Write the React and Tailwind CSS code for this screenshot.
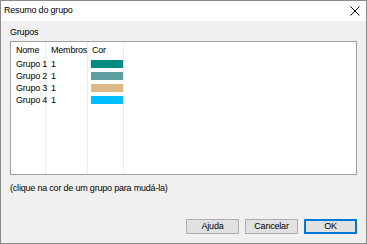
const grupos = [
  { nome: "Grupo 1", membros: 1, cor: "#008b82" },
  { nome: "Grupo 2", membros: 1, cor: "#5f9ea0" },
  { nome: "Grupo 3", membros: 1, cor: "#deb887" },
  { nome: "Grupo 4", membros: 1, cor: "#00bfff" },
];

function Button({ children, primary }) {
  return (
    <button
      type="button"
      className={
        primary
          ? "w-[53px] h-[15px] bg-[#e1e1e1] border border-[#0078d7] ring-1 ring-inset ring-[#0078d7] text-[9px] leading-none text-black"
          : "w-[53px] h-[15px] bg-[#e1e1e1] border border-[#adadad] text-[9px] leading-none text-black"
      }
    >
      {children}
    </button>
  );
}

export default function App() {
  return (
    <div
      className="w-[367px] h-[244px] border border-[#8a8a8a] flex flex-col text-black whitespace-nowrap tracking-[-0.2px]"
      style={{ fontFamily: "'Liberation Sans', Arial, sans-serif" }}
    >
      {/* barra de titulo */}
      <div className="h-[20px] bg-white flex items-center justify-between pl-[3px] pr-[5px]">
        <span className="text-[9px] leading-none -mt-[1px]">Resumo do grupo</span>
        <svg width="10" height="10" viewBox="0 0 10 10" className="mr-[1px]">
          <path d="M0.5 0.5 L9.5 9.5 M9.5 0.5 L0.5 9.5" stroke="#000" strokeWidth="1" />
        </svg>
      </div>

      <div className="flex-1 bg-[#f0f0f0] px-[9px] flex flex-col">
        <div className="text-[9px] leading-none mt-[7px] mb-[4px]">Grupos</div>

        <div className="h-[134px] border border-[#a0a0a0] bg-white flex text-[9px] leading-none">
          <div className="w-[35px] border-r border-[#ececec] pl-[5px]">
            <div className="h-[16px] flex items-center">Nome</div>
            {grupos.map((g) => (
              <div key={g.nome} className="h-[12px] flex items-center">
                {g.nome}
              </div>
            ))}
          </div>
          <div className="w-[42px] border-r border-[#ececec] pl-[5px]">
            <div className="h-[16px] flex items-center">Membros</div>
            {grupos.map((g) => (
              <div key={g.nome} className="h-[12px] flex items-center">
                {g.membros}
              </div>
            ))}
          </div>
          <div className="w-[36px] border-r border-[#ececec] pl-[3px]">
            <div className="h-[16px] flex items-center pl-[1px]">Cor</div>
            {grupos.map((g) => (
              <div key={g.nome} className="h-[12px] flex items-center">
                <div className="w-[32px] h-[8px]" style={{ backgroundColor: g.cor }} />
              </div>
            ))}
          </div>
        </div>

        <div className="text-[9px] leading-none mt-[9px]">
          (clique na cor de um grupo para mudá-la)
        </div>

        <div className="flex justify-end gap-[6px] mt-auto mb-[9px]">
          <Button>Ajuda</Button>
          <Button>Cancelar</Button>
          <Button primary>OK</Button>
        </div>
      </div>
    </div>
  );
}
